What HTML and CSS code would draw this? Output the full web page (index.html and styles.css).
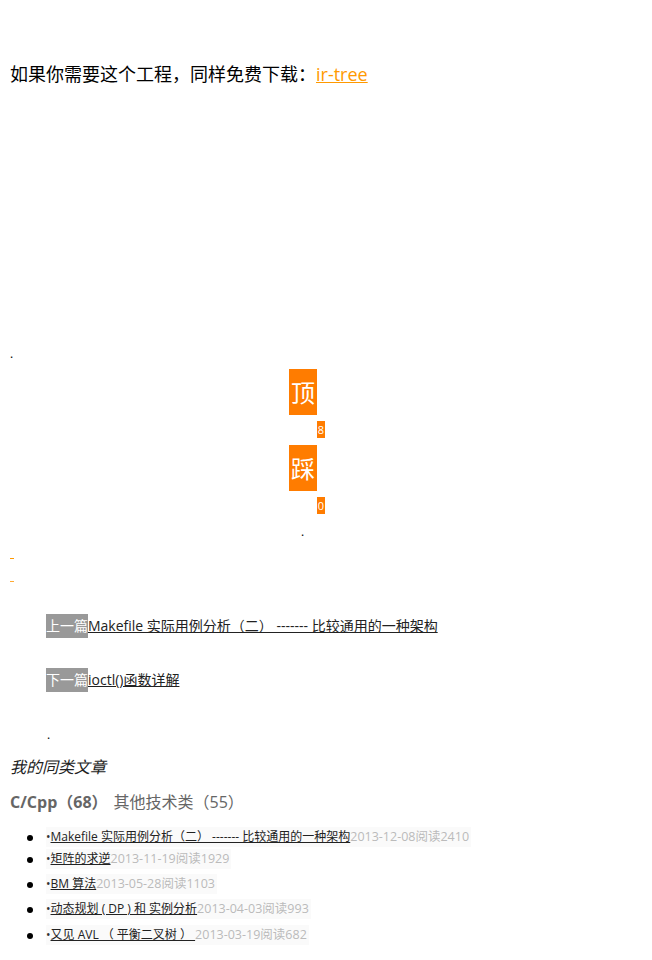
FILE: index.html
```html
<!DOCTYPE html>
<html lang="zh">
<head>
<meta charset="utf-8">
<link rel="stylesheet" href="styles.css">
</head>
<body>
<p class="intro">如果你需要这个工程，同样免费下载：<a class="dl" href="#">ir-tree</a></p>
<div class="dot dot-a">.</div>
<div class="digg">
  <div class="vote"><span class="vbox">顶</span><span class="cnt">8</span></div>
  <div class="vote"><span class="vbox">踩</span><span class="cnt">0</span></div>
</div>
<div class="dot dot-b">.</div>
<div class="dash d1"></div>
<div class="dash d2"></div>
<div class="nav">
  <div class="navrow"><span class="tag">上一篇</span><a href="#">Makefile 实际用例分析（二） ------- 比较通用的一种架构</a></div>
  <div class="navrow"><span class="tag">下一篇</span><a href="#">ioctl()函数详解</a></div>
</div>
<div class="dot dot-c">.</div>
<div class="same">我的同类文章</div>
<div class="cats"><span class="cat on">C/Cpp（68）</span><span class="cat">其他技术类（55）</span></div>
<ul class="list">
  <li class="r1"><span class="item">•<a href="#">Makefile 实际用例分析（二） ------- 比较通用的一种架构</a><span class="meta">2013-12-08阅读2410</span></span></li>
  <li class="r2"><span class="item">•<a href="#">矩阵的求逆</a><span class="meta">2013-11-19阅读1929</span></span></li>
  <li class="r2"><span class="item">•<a href="#">BM 算法</a><span class="meta">2013-05-28阅读1103</span></span></li>
  <li class="r3"><span class="item">•<a href="#">动态规划 ( DP ) 和 实例分析</a><span class="meta">2013-04-03阅读993</span></span></li>
  <li class="r2"><span class="item">•<a href="#">又见 AVL （ 平衡二叉树 ） </a><span class="meta">2013-03-19阅读682</span></span></li>
</ul>
</body>
</html>
```
FILE: styles.css
```css
html, body { margin: 0; padding: 0; background: #fff; }
body {
  font-family: "Open Sans", "Noto Sans CJK SC", sans-serif;
  color: #000;
  padding: 0 10px;
}
.intro {
  margin: 62px 0 0;
  font-size: 18px;
  line-height: 24px;
}
.dl { color: #f90; text-decoration: underline; }
.dot { font-size: 12px; line-height: 12px; height: 12px; }
.dot-a { margin-top: 262px; }
.digg { margin-left: 279px; margin-top: 9px; }
.vote { display: flex; flex-direction: column; align-items: flex-start; }
.vbox {
  display: block;
  width: 28px; height: 46px;
  background: #ff7c00;
  color: #fff;
  font-size: 24px;
  line-height: 46px;
  text-align: center;
  font-family: "Noto Sans CJK SC", sans-serif;
}
.cnt {
  display: block;
  margin: 6px 0 7px 28px;
  width: 8px; height: 17px;
  background: #ff7c00;
  color: #fff;
  font-size: 11px;
  line-height: 17px;
  text-align: center;
}
.dot-b { margin-left: 291px; margin-top: 5px; }
.dash { width: 4px; height: 0; border-bottom: 1px solid #f90; }
.d1 { margin-top: 20px; }
.d2 { margin-top: 22px; border-color: #fa3; }
.nav { margin-left: 36px; margin-top: 32px; }
.navrow { display: flex; align-items: stretch; height: 24px; font-size: 14px; line-height: 24px; margin-bottom: 30px; }
.tag { background: #999; color: #fff; padding: 0; }
.navrow a { color: #222; text-decoration: underline; }
.dot-c { margin-left: 37px; margin-top: 37px; }
.same { font-style: italic; font-size: 16px; line-height: 22px; margin-top: 15px; color: #222; }
.cats { font-size: 16px; line-height: 22px; margin-top: 13px; color: #666; }
.cat.on { font-weight: bold; margin-right: 6px; }
.list { margin: 14px 0 0; padding-left: 36px; font-size: 18px; }
.list li { height: 25px; line-height: 20px; }
.list li.r1 { height: 22px; }
.list li.r3 { height: 26px; }
.item { display: inline-block; vertical-align: top; background: #fafafa; font-size: 12px; line-height: 20px; padding-right: 2px; color: #333; }
.item a { color: #222; text-decoration: underline; }
.meta { color: #bbb; font-size: 12.5px; }
```
